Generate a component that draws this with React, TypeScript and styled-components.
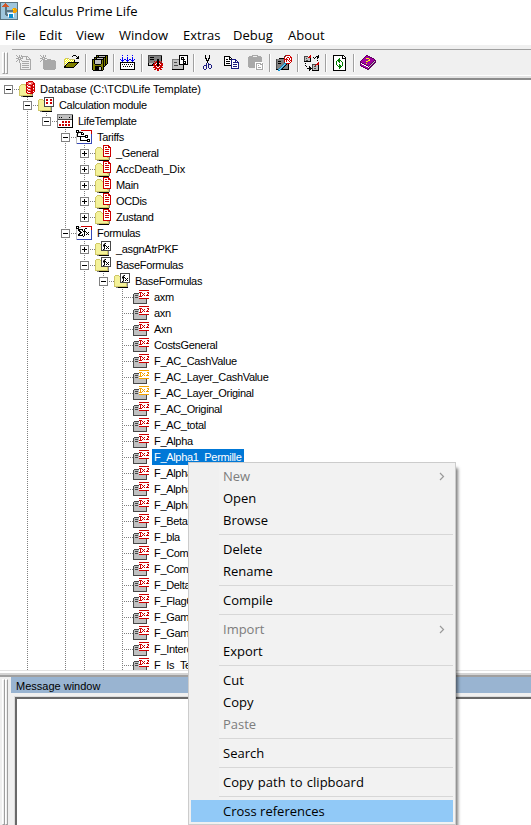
import React from 'react';
import styled, { createGlobalStyle, css } from 'styled-components';

const GlobalStyle = createGlobalStyle`
  html, body, #root { margin: 0; height: 100%; }
  body { overflow: hidden; background: #fff; color: #000; }
  * { box-sizing: border-box; }
`;

/* ---------- pixel icons ---------- */

const palette: Record<string, string> = {
  K: '#000000', W: '#ffffff', G: '#808080', L: '#c0c0c0', D: '#484848',
  Y: '#f4f29a', y: '#cfc766', O: '#808000', R: '#cc0000', r: '#ef6a6a',
  B: '#0000ff', N: '#1b1b80', A: '#f5a100', M: '#a000a0', m: '#600060',
  E: '#008000', a: '#a9a9a9', C: '#9fc6dc', T: '#d35a2c', c: '#0c8fd0',
  g: '#5a7480', U: '#3548b8', F: '#ffff00',
};

const PixelSvg = styled.svg`
  display: block;
  flex: none;
`;

function PixelIcon({ rows, size = 16 }: { rows: string[]; size?: number }) {
  const rects: React.ReactNode[] = [];
  rows.forEach((line, y) => {
    let x = 0;
    while (x < line.length) {
      const ch = line[x];
      let end = x + 1;
      while (end < line.length && line[end] === ch) end++;
      if (palette[ch]) {
        rects.push(<rect key={`${x}-${y}`} x={x} y={y} width={end - x} height={1} fill={palette[ch]} />);
      }
      x = end;
    }
  });
  return (
    <PixelSvg width={size} height={size} viewBox={`0 0 ${size} ${size}`} shapeRendering="crispEdges">
      {rects}
    </PixelSvg>
  );
}

const leafShape = (ink: string) =>
  [
    '................',
    '......RRRRRRRRRR',
    '......WWWWWWWWWW',
    '......RRRWWWWWRR',
    '.DDDDDWRWRWRWWWR',
    'DLLLLLWRWWRWWWRW',
    'DLDDDLWRWRWRWRRR',
    'DLLLLLRRRWWWWWWW',
    'DLDDDLWWWWWWWWWW',
    'DLLLLLRRRRRRRRRR',
    'DLLLLLLLLLLLLD..',
    'DLLLLLLLLLLLLD..',
    'DLLLLLLLLLLLLD..',
    'DLLLLLLLLLLLLD..',
    'DDDDDDDDDDDDDD..',
  ].map((line) => line.replace(/R/g, ink));

const icons = {
  leaf: leafShape('R'),
  leafAmber: leafShape('A'),
  database: [
    '.........RRRRR..',
    '.......RRrrrrrR.',
    '.......RrrWWrrRR',
    '..yyyyyRRrrrrRRR',
    '.yYYYYyRWRRRRRWR',
    'yYYYYYYRrWWrRRrR',
    'yYYYYYYRRrrrRRRR',
    'yYYYYYYRWRRRRRWR',
    'yYYYYYYRrWWrRRrR',
    'yYYYYYYRRrrrRRRR',
    'yYYYYYYRWRRRRRWR',
    'yYYYYYYRrWWrRRR.',
    'yYYYYYYYRRRRRR..',
    'yYYYYYYYYYYyyG..',
    'yyyyyyyyyyyyyG..',
    '..GGKKKKKKKKKK..',
  ],
  calc: [
    '......DDDDDDDDDD',
    '......DWWWWWWWWD',
    '.yyyy.DWRRWWRRWD',
    'yYYYYyDWRRWWRRWD',
    'yYYYYYDWWWWWWWWD',
    'yYYYYYDWRRWWRRWD',
    'yYYYYYDWRRWWRRWD',
    'yYYYYYDWWWWWWWWD',
    'yYYYYYDWWWWWWWWD',
    'yYYYYYDDDDDDDDDD',
    'yYYYYYYYYYYYyG..',
    'yYYYYYYYYYYYyG..',
    'yYYYYYYYYYYYyG..',
    'yyyyyyyyyyyyyG..',
    '..GGKKKKKKKKKK..',
  ],
  template: [
    '................',
    'GGGGGGGGGGGGGGGG',
    'GLLLLLLLLLLLLLLK',
    'GLLLLLLLLLLLLLLK',
    'GLKLKLLLLLLLKLLK',
    'GLLLLLLLLLLLLLLK',
    'GDDDDDDDDDDDDDDK',
    'GWWWWWWWWWWWWWWK',
    'GWWWWRRWRRWRRWWK',
    'GWWWWRRWRRWRRWWK',
    'GWWWWWWWWWWWWWWK',
    'GWRRWRRWRRWRRWWK',
    'GWRRWRRWRRWRRWWK',
    'GWWWWWWWWWWWWWWK',
    'GKKKKKKKKKKKKKKK',
  ],
  tree: [
    '................',
    'KKK..RRRRRRRRRRR',
    'KWKLLWWWWWWWWWWR',
    'KKKKKKKWWWWWWWWR',
    '.KLWWKWKWWWWWWWR',
    'LKWWWKKKWWWWWWWU',
    'LKWWWWWWWKKKWWWU',
    'LKKKKKKKKKWKWWWU',
    'LWWWKWWWWKKKWWWU',
    'LWWWKWWWWWWWWWWU',
    'LWWWKWWWWWWKKKWU',
    'LWWWKKKKKKKKWKWU',
    'LWWWWWWWWWWKKKWU',
    'LWWWWWWWWWWWWWWU',
    'LUUUUUUUUUUUUUUU',
  ],
  formulas: [
    '................',
    'KKK..RRRRRRRRRRR',
    'KWKLLWWWWWWWWWWR',
    'KKKWWWWWWKKWWWWR',
    'LWKKKKKWKWWWWWWR',
    'LWKKWWKWKWWWWWWU',
    'LWWKKWWKKKWWWWWU',
    'LWWWKKWWKWKWKWWU',
    'LWWKKWWWKWWKWWWU',
    'LWKKWWKWKWKWKWWU',
    'LWKKKKKWKWWWWWWU',
    'LWWWWWWKWWWWWWWU',
    'LWWWWWWWWWWWWWWU',
    'LWWWWWWWWWWWWWWU',
    'LUUUUUUUUUUUUUUU',
  ],
  folderDoc: [
    '........RRRRRR..',
    '........RWWWWRR.',
    '..yyyy..RWRRWRRR',
    '.yYYYYy.RWWWWWWR',
    'yYYYYYYyRWRRRRWR',
    'yYYYYYYYRWWWWWWR',
    'yYYYYYYYRWRRRRWR',
    'yYYYYYYYRWWWWWWR',
    'yYYYYYYYRWRRRRWR',
    'yYYYYYYYRWWWWWWR',
    'yYYYYYYYRWWWWWWR',
    'yYYYYYYYRRRRRRRR',
    'yYYYYYYYYYYYyyG.',
    'yYYYYYYYYYYYYyG.',
    'yyyyyyyyyyyyyyG.',
    '..GGKKKKKKKKKK..',
  ],
  folderFx: [
    '......DDDDDDDDDD',
    '......DWWWWWWWWD',
    '.yyyy.DWWGKWWWWD',
    'yYYYYyDWGKWWWWWD',
    'yYYYYYDWKKKWWWWD',
    'yYYYYYDWGKWKWKWD',
    'yYYYYYDWWKWWKWWD',
    'yYYYYYDWWKWKWKWD',
    'yYYYYYDWKGWWWWWD',
    'yYYYYYDDDDDDDDDD',
    'yYYYYYYYYYYYyG..',
    'yYYYYYYYYYYYyG..',
    'yYYYYYYYYYYYyG..',
    'yyyyyyyyyyyyyG..',
    '..GGKKKKKKKKKK..',
  ],
  newDoc: [
    'a..a.a..........',
    '.a.a.aaaaaaa....',
    '..aaa.a...a.a...',
    'aaa.aaa...a..a..',
    '..aaa.....aaaaa.',
    '.a.a.a........a.',
    'a..a..aaaaaaa.a.',
    '...a..........a.',
    '....a.aaaaaaa.a.',
    '....a.........a.',
    '....a.aaaaaaa.a.',
    '....a.........a.',
    '....a.aaaaaaa.a.',
    '....a.........a.',
    '....aaaaaaaaaaa.',
  ],
  newFolder: [
    'a..a.a..........',
    '.a.a.a..........',
    '..aaa...........',
    'aaa.aaa.........',
    '..aaa..aaaa.....',
    '.a.aaaaaaaaaaaa.',
    'a..aaaaaaaaaaaaa',
    '...aaaaaaaaaaaaa',
    '...aaaaaaaaaaaaa',
    '...aaaaaaaaaaaaa',
    '...aaaaaaaaaaaaa',
    '...aaaaaaaaaaaaa',
    '...aaaaaaaaaaaaa',
    '...aaaaaaaaaaaaa',
    '....aaaaaaaaaaa.',
  ],
  open: [
    '.........KKK....',
    '........K...K.K.',
    '.............KK.',
    '.yyyy.......KKK.',
    'yFWFWyyyyyy.....',
    'yWFWFWFWFWK.....',
    'yFWFWFWFWFK.....',
    'yWFWKKKKKKKKKKK.',
    'yFWKOOOOOOOOOK..',
    'yWKOOOOOOOOOK...',
    'yKOOOOOOOOOK....',
    'KKOOOOOOOOK.....',
    'KKKKKKKKKK......',
  ],
  save: [
    '....KKKKKKKKKKKK',
    '....KOKLLLLLLKOK',
    '..KKKKKKKKKKKKOK',
    '..KOKLLLLLLKOKOK',
    'KKKKKKKKKKKKOKOK',
    'KOKLLLLLLKOKOKOK',
    'KOKLLLLLLKOKOKOK',
    'KOKLLLLLLKOKOKOK',
    'KOKLLLLLLKOKOKOK',
    'KOOKKKKKKOOKOKK.',
    'KOOOOOOOOOOKOK..',
    'KOOKKKKKKOOKK...',
    'KOOKKKKLLKOK....',
    'KOOKKKKLLKOK....',
    'KOOKKKKLLKOK....',
    '.KKKKKKKKKK.....',
  ],
  compile: [
    '..B....B....B...',
    '................',
    '..B....B....B...',
    '..B....B....B...',
    'B.B.BB.B.BB.B.B.',
    '.BBB..BBB..BBB..',
    '..B....B....B...',
    'KKKKKKKKKKKKKKK.',
    'KWWWWWWWWWWWWWK.',
    'KWKWKWKWKWKWKWK.',
    'KWWWWWWWWWWWWWK.',
    'KWWKWKWKWKWKWWK.',
    'KWWWWWWWWWWWWWK.',
    'KWWWWWWWWWWWWWK.',
    'KKKKKKKKKKKKKKK.',
  ],
  build: [
    'DDDDDDDDDDDDDD..',
    'DGGGGGGGGGGGGK..',
    'DGKKKKGGGGGGGK..',
    'DGGGGGGGGGGGGK..',
    'DGKKKKGGGKKGGK..',
    'DGGGGGGGGKKGGK..',
    'DGGGGGRGRKKRGR..',
    'DGGGGGGRRKKRRD..',
    'KLLLLKRRWKKWRRR.',
    'KLLLKRRWRKKRWRR.',
    'KKKKKRRRRKKRRRR.',
    '......RRWRRWRR..',
    '.....RRRRWWRRRR.',
    '.......RRRRRR...',
    '......RR.RR.RR..',
    '.........RR.....',
  ],
  layout: [
    '.......KKKKKKKKK',
    '.......KWWWWWWWK',
    '.......KWKKKWWWK',
    '.......KWKWKWWWK',
    'GGGGGGGKWKKKKWWK',
    'GLLLLLLKWWWKWWWK',
    'GLLLLLLKWWWKKKWK',
    'GLDDDLLKWWWKWKWK',
    'GLLLLLLKWWWKKKWK',
    'GLLLLLLKKKKKKKKK',
    'GLDDDDLLLLLK....',
    'GLLLLLLLLLLK....',
    'GLLLLLLLLLLK....',
    'GLLLLLLLLLLK....',
    'KKKKKKKKKKKK....',
  ],
  cut: [
    '.....K...K......',
    '.....K...K......',
    '.....K...K......',
    '.....KK.KK......',
    '......K.K.......',
    '......KKK.......',
    '.......K........',
    '.......K........',
    '......N.N.......',
    '......N.NNN.....',
    '....NNN.N..N....',
    '...N..N.N..N....',
    '...N..N.N..N....',
    '...N..N..NN.....',
    '....NN..........',
  ],
  copy: [
    '................',
    'KKKKKK..........',
    'KWWWWKK.........',
    'KWWWWKWK........',
    'KWKKWKKNNNNN....',
    'KWWWWWWNWWWNN...',
    'KWKKKKWNWWWNWN..',
    'KWWWWWWNWNNNNNN.',
    'KWKKKKWNWWWWWWN.',
    'KWWWWWWNWNNNNWN.',
    'KKKKKKKNWWWWWWN.',
    '.......NWNNNNWN.',
    '.......NWWWWWWN.',
    '.......NNNNNNNN.',
  ],
  paste: [
    '....aaaaaa......',
    '.aaaa....aaaa...',
    'aaaaaaaaaaaaaa..',
    'aaaaaaaaaaaaaa..',
    'aaaaaaaaaaaaaa..',
    'aaaaaaaaaaaaaa..',
    'aaaaaaaaaaaaaa..',
    'aaaaaaaWWWWWWWW.',
    'aaaaaaaWaaaaaWa.',
    'aaaaaaaWaWWWaaaW',
    'aaaaaaaWaWaWWWaW',
    'aaaaaaaWaWWWWWaW',
    '.aaaaaaWaWaaaWaW',
    '.......WaWWWWWaW',
    '.......WaaaaaaaW',
  ],
  find: [
    '.........DRRRR..',
    '........DRWWWWR.',
    '........RWWRRWRR',
    '...KKKKKRWRWWRWR',
    'DGGGGGGGRRRRWRWR',
    'DGGGGGGGRWRWRWRR',
    'DGKKKGGGRWRWWRWR',
    'DGGGGGGGDWWWWWR.',
    'DGKKKGGGccRRRR..',
    'DGGGGGGcCcKGK...',
    'DGGGGGcCcKGGK...',
    'DGGGGcCcKGGGK...',
    'DGGGcCcKGGGGK...',
    'DGGcCcKGGGGGK...',
    'KKcCcKKKKKKKK...',
    '..cc............',
  ],
  cross: [
    '......R.......K.',
    'DDDD.RR.....KKK.',
    'DLLLRRR..K.K.KK.',
    'DLDLLLK...K..K..',
    'DLLLLLK.........',
    'DLDDLLK......K..',
    'KKKKKKK.........',
    '..............R.',
    '.K...........RR.',
    '........DDDDRRR.',
    '.K......DLLRLLK.',
    '..K..K..DLDDLLK.',
    '.....KK.DLLLLLK.',
    '...KKKKKDLDDLLK.',
    '.....KK.DLLLLLK.',
    '.....K..KKKKKKK.',
  ],
  refresh: [
    '.KKKKKKKKKKK....',
    '.KWWWWWWWWKWK...',
    '.KWWWWWWWWKWWK..',
    '.KWWWWWEWWKKKK..',
    '.KWWWWEEWWWWWK..',
    '.KWWWEEEEWWWWK..',
    '.KWWEWEEWEWWWK..',
    '.KWWEWWEWWEWWK..',
    '.KWWEWWWWWEWWK..',
    '.KWWEWWEWWEWWK..',
    '.KWWWEWEEWEWWK..',
    '.KWWWWEEEEWWWK..',
    '.KWWWWWEEWWWWK..',
    '.KWWWWWEWWWWWK..',
    '.KWWWWWWWWWWWK..',
    '.KKKKKKKKKKKKK..',
  ],
  book: [
    '......mm........',
    '.....mMMmm......',
    '....mMMMMMmm....',
    '...mMMFFFMMMmm..',
    '..mMMMMMMFMMMMm.',
    '.mMMMMMMFFMMMMmm',
    'mMMMMMFFMMMMMmLm',
    'mmMMMMMMMMMMmLmm',
    'mWmmMMFMMMMmLmm.',
    'mMWWmmMMMMmLmm..',
    'mMMMWWmmMmLmm...',
    '.mmMMMWWmLmm....',
    '...mmMMMWmm.....',
    '.....mmMmm......',
    '.......mm.......',
  ],
  app: [
    'gggggggggggggggggg',
    'gCCCCTCCCCCCCCCCCg',
    'gCCCTTTCCCCCCCCCCg',
    'gCCTTTTTCCCCCCCCCg',
    'gCTTTTTTTCCCCCCCCg',
    'gCCCCggCCCCCCCCCCg',
    'gCCCCggCCCCCCAAACg',
    'gCCCCggCCCCCAFAAAg',
    'gCCCCggggggggAAAAg',
    'gCCCCggggggggAAAAg',
    'gCCCCggCCCCCCAAACg',
    'gCCCCggCWWWWWWCCCg',
    'gCCCCgggWccccWCCCg',
    'gCCCCCggWccccWCCCg',
    'gCCCCCCCWccccWCCCg',
    'gCCCCCCCCccccCCCCg',
    'gCCCCCCCCCCCCCCCCg',
    'gggggggggggggggggg',
  ],
};

type IconName = keyof typeof icons;

/* ---------- window frame ---------- */

const uiFont = css`
  font-family: 'Open Sans', 'Noto Sans', sans-serif;
  font-size: 13px;
`;
const treeFont = css`
  font-family: 'Liberation Sans', Arial, sans-serif;
  font-size: 11px;
`;

const Window = styled.div`
  position: relative;
  width: 531px;
  height: 825px;
  overflow: hidden;
  display: flex;
  flex-direction: column;
  background: #fff;
`;

const TitleBar = styled.header`
  ${uiFont};
  flex: none;
  height: 24px;
  display: flex;
  align-items: center;
  gap: 5px;
  line-height: 22px;
  padding-bottom: 2px;
`;

const MenuBar = styled.nav`
  ${uiFont};
  flex: none;
  height: 21px;
  display: flex;
  gap: 14px;
  padding-left: 5px;
  line-height: 22px;
`;

const MenuTitle = styled.span<{ $w: number }>`
  width: ${(p) => p.$w}px;
  white-space: nowrap;
`;

const Toolbar = styled.div`
  flex: none;
  height: 35px;
  background: #f0f0f0;
  display: flex;
  flex-direction: column;
`;

const ToolbarEdge = styled.div`
  height: 5px;
  margin-left: 12px;
  border-bottom: 1px solid #a0a0a0;
`;

const ToolbarButtons = styled.div`
  flex: 1;
  display: flex;
  align-items: center;
  padding-left: 2px;
`;

const ToolbarBottom = styled.div`
  height: 5px;
  border-top: 1px solid #fff;
  border-bottom: 2px solid #8c8c8c;
  background: #e3e3e3;
`;

const Grip = styled.div<{ $h: string; $gap?: number }>`
  width: 6px;
  height: ${(p) => p.$h};
  margin-right: ${(p) => p.$gap ?? 0}px;
  flex: none;
  display: flex;
  justify-content: space-between;
  &::before, &::after {
    content: '';
    width: 3px;
    border: 1px solid #a0a0a0;
    border-color: #fff #a0a0a0 #a0a0a0 #fff;
  }
`;

const ToolGroup = styled.div`
  display: flex;
  & + & {
    margin-left: 1px;
    padding-left: 2px;
    border-left: 1px solid #a0a0a0;
    box-shadow: inset 1px 0 0 #fff;
  }
`;

const ToolButton = styled.button`
  width: 24px;
  height: 18px;
  padding: 0;
  border: 0;
  background: none;
  display: grid;
  place-items: center;
`;

/* ---------- tree ---------- */

const dotsV = 'repeating-linear-gradient(to bottom, #808080 0 1px, transparent 1px 2px)';
const dotsH = 'repeating-linear-gradient(to right, #808080 0 1px, transparent 1px 2px)';

const TreePane = styled.main`
  ${treeFont};
  flex: none;
  height: 590px;
  padding-top: 1px;
  overflow: hidden;
`;

const TreeRow = styled.div`
  height: 16px;
  display: flex;
`;

const Guide = styled.span<{ $on: boolean }>`
  flex: none;
  width: 19px;
  height: 16px;
  background: ${(p) => (p.$on ? `${dotsV} 8px 0 / 1px 16px no-repeat` : 'none')};
`;

const Branch = styled.span<{ $up: boolean; $down: boolean }>`
  flex: none;
  width: 19px;
  height: 16px;
  display: flex;
  align-items: center;
  padding: 1px 0 0 4px;
  background:
    ${dotsH} 8px 8px / 11px 1px no-repeat,
    ${dotsV} 8px 0 / ${(p) => (p.$up ? '1px 8px' : '0 0')} no-repeat,
    ${dotsV} 8px 8px / ${(p) => (p.$down ? '1px 8px' : '0 0')} no-repeat;
`;

const Expander = styled.span<{ $open: boolean }>`
  width: 9px;
  height: 9px;
  border: 1px solid #808080;
  background:
    linear-gradient(#000, #000) 1px 3px / 5px 1px no-repeat,
    linear-gradient(#000, #000) 3px 1px / ${(p) => (p.$open ? '0 0' : '1px 5px')} no-repeat,
    #fff;
`;

const TreeLabel = styled.span<{ $selected?: boolean; $tight: boolean }>`
  margin-left: 3px;
  padding: 0 2px;
  height: 16px;
  line-height: 16px;
  white-space: nowrap;
  letter-spacing: ${(p) => (p.$tight ? '-0.32px' : '-0.05px')};
  color: ${(p) => (p.$selected ? '#fff' : '#000')};
  background: ${(p) => (p.$selected ? '#0078d7' : 'transparent')};
`;

type Node = {
  label: string;
  depth: number;
  icon: IconName;
  state?: 'open' | 'closed';
  guides?: number[];
  up?: boolean;
  down?: boolean;
  loose?: boolean;
};

const leafNames = [
  'axm', 'axn', 'Axn', 'CostsGeneral', 'F_AC_CashValue', 'F_AC_Layer_CashValue', 'F_AC_Layer_Original',
  'F_AC_Original', 'F_AC_total', 'F_Alpha', 'F_Alpha1_Permille', 'F_Alpha2', 'F_Alpha3', 'F_Alpha4',
  'F_Beta', 'F_bla', 'F_Comm', 'F_Comm', 'F_Delta', 'F_FlagC', 'F_Gam', 'F_Gam', 'F_Intere', 'F_Is_Te',
];

const tariff = (label: string, last = false): Node => ({
  label, depth: 4, icon: 'folderDoc', state: 'closed', guides: [1, 3], down: !last,
  loose: label === 'AccDeath_Dix',
});

const nodes: Node[] = [
  { label: 'Database (C:\\TCD\\Life Template)', depth: 0, icon: 'database', state: 'open', up: false, down: false, loose: true },
  { label: 'Calculation module', depth: 1, icon: 'calc', state: 'open' },
  { label: 'LifeTemplate', depth: 2, icon: 'template', state: 'open', guides: [1], down: false },
  { label: 'Tariffs', depth: 3, icon: 'tree', state: 'open', guides: [1] },
  tariff('_General'),
  tariff('AccDeath_Dix'),
  tariff('Main'),
  tariff('OCDis'),
  tariff('Zustand', true),
  { label: 'Formulas', depth: 3, icon: 'formulas', state: 'open', guides: [1] },
  { label: '_asgnAtrPKF', depth: 4, icon: 'folderFx', state: 'closed', guides: [1, 3] },
  { label: 'BaseFormulas', depth: 4, icon: 'folderFx', state: 'open', guides: [1, 3] },
  { label: 'BaseFormulas', depth: 5, icon: 'folderFx', state: 'open', guides: [1, 3, 4] },
  ...leafNames.map((label): Node => ({
    label, depth: 6, icon: label.startsWith('F_AC_Layer') ? 'leafAmber' : 'leaf', guides: [1, 3, 4, 5],
  })),
];

function TreeItem({ node }: { node: Node }) {
  return (
    <TreeRow>
      {Array.from({ length: node.depth }, (_, i) => (
        <Guide key={i} $on={!!node.guides?.includes(i)} />
      ))}
      <Branch $up={node.up !== false} $down={node.down !== false}>
        {node.state && <Expander $open={node.state === 'open'} />}
      </Branch>
      <PixelIcon rows={icons[node.icon]} />
      <TreeLabel $selected={node.label === 'F_Alpha1_Permille'} $tight={!node.loose}>
        {node.label}
      </TreeLabel>
    </TreeRow>
  );
}

/* ---------- message window ---------- */

const Splitter = styled.div`
  flex: none;
  height: 7px;
  border-top: 1px solid #e3e3e3;
  border-bottom: 2px solid #a0a0a0;
  background: linear-gradient(#fff 0 2px, #d4d4d4 2px);
`;

const Dock = styled.section`
  flex: 1;
  display: flex;
  background: #f0f0f0;
`;

const DockGrip = styled.div`
  width: 11px;
  padding: 2px 2px 0;
`;

const DockBody = styled.div`
  flex: 1;
  display: flex;
  flex-direction: column;
`;

const DockTitle = styled.div`
  ${treeFont};
  height: 16px;
  padding-left: 5px;
  line-height: 18px;
  background: #99b4d1;
`;

const MessageArea = styled.div`
  flex: 1;
  margin: 4px 0 0 4px;
  border: solid #696969;
  border-width: 2px 0 0 2px;
  background: #fff;
  outline: 1px solid #dcdcdc;
`;

/* ---------- context menu ---------- */

const ContextMenu = styled.div`
  ${uiFont};
  position: absolute;
  left: 188px;
  top: 462px;
  width: 268px;
  height: 363px;
  padding: 2px;
  border: 1px solid #ccc;
  background: linear-gradient(to right, #f0f0f0 30px, #f2f2f2 30px);
  box-shadow: 3px 5px 3px -1px rgba(0, 0, 0, 0.5);
`;

const MenuItem = styled.div<{ $disabled?: boolean; $active?: boolean; $wide?: boolean }>`
  height: 22px;
  padding: 0 8px 0 32px;
  display: flex;
  justify-content: space-between;
  align-items: center;
  line-height: 22px;
  white-space: nowrap;
  word-spacing: ${(p) => (p.$wide ? '1px' : '0')};
  color: ${(p) => (p.$disabled ? '#7d7d7d' : '#000')};
  background: ${(p) => (p.$active ? '#91c9f7' : 'transparent')};
`;

const MenuSeparator = styled.div`
  height: 7px;
  margin-left: 28px;
  background: linear-gradient(#d7d7d7, #d7d7d7) 0 3px / 100% 1px no-repeat;
`;

const Chevron = () => (
  <svg width="6" height="9" viewBox="0 0 6 9" fill="none" stroke="#9a9a9a" strokeWidth="1.2">
    <path d="M1 1l3.5 3.5L1 8" />
  </svg>
);

type Entry = { label: string; disabled?: boolean; submenu?: boolean; active?: boolean };

const menuGroups: Entry[][] = [
  [{ label: 'New', disabled: true, submenu: true }, { label: 'Open' }, { label: 'Browse' }],
  [{ label: 'Delete' }, { label: 'Rename' }],
  [{ label: 'Compile' }],
  [{ label: 'Import', disabled: true, submenu: true }, { label: 'Export' }],
  [{ label: 'Cut' }, { label: 'Copy' }, { label: 'Paste', disabled: true }],
  [{ label: 'Search' }],
  [{ label: 'Copy path to clipboard' }],
  [{ label: 'Cross references', active: true }],
];

const menus: [string, number][] = [
  ['File', 20], ['Edit', 23], ['View', 29], ['Window', 50], ['Extras', 36], ['Debug', 41], ['About', 38],
];

const toolGroups: IconName[][] = [
  ['newDoc', 'newFolder', 'open'], ['save'], ['compile'], ['build', 'layout'],
  ['cut', 'copy', 'paste'], ['find'], ['cross'], ['refresh'], ['book'],
];

export default function App() {
  return (
    <Window>
      <GlobalStyle />
      <TitleBar>
        <PixelIcon rows={icons.app} size={18} />
        <span>Calculus Prime Life</span>
      </TitleBar>
      <MenuBar>
        {menus.map(([label, w]) => (
          <MenuTitle key={label} $w={w}>{label}</MenuTitle>
        ))}
      </MenuBar>
      <Toolbar>
        <ToolbarEdge />
        <ToolbarButtons>
          <Grip $h="22px" $gap={4} />
          {toolGroups.map((group) => (
            <ToolGroup key={group[0]}>
              {group.map((name) => (
                <ToolButton key={name} aria-label={name}>
                  <PixelIcon rows={icons[name]} />
                </ToolButton>
              ))}
            </ToolGroup>
          ))}
        </ToolbarButtons>
        <ToolbarBottom />
      </Toolbar>
      <TreePane>
        {nodes.map((node, i) => (
          <TreeItem key={i} node={node} />
        ))}
      </TreePane>
      <Splitter />
      <Dock>
        <DockGrip>
          <Grip $h="100%" />
        </DockGrip>
        <DockBody>
          <DockTitle>Message window</DockTitle>
          <MessageArea />
        </DockBody>
      </Dock>
      <ContextMenu>
        {menuGroups.map((group, g) => (
          <React.Fragment key={g}>
            {g > 0 && <MenuSeparator />}
            {group.map((e) => (
              <MenuItem key={e.label} $disabled={e.disabled} $active={e.active} $wide={e.label.startsWith('Copy path')}>
                {e.label}
                {e.submenu && <Chevron />}
              </MenuItem>
            ))}
          </React.Fragment>
        ))}
      </ContextMenu>
    </Window>
  );
}
